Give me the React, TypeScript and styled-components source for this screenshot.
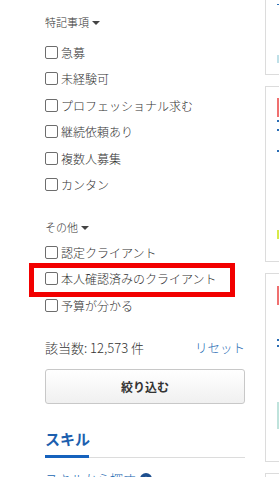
import React from 'react'
import styled, { createGlobalStyle } from 'styled-components'

const GlobalStyle = createGlobalStyle`
  html, body {
    margin: 0;
    padding: 0;
    background: #ffffff;
    overflow: hidden;
  }
  body {
    font-family: "Noto Sans CJK JP", "Noto Sans", sans-serif;
    font-weight: 300;
    color: #333333;
  }
`

const Page = styled.div`
  display: flex;
  align-items: flex-start;
  gap: 20px;
  width: 279px;
  height: 477px;
  padding-left: 45px;
  box-sizing: border-box;
  overflow: hidden;
`

const Sidebar = styled.div`
  flex: 0 0 200px;
  display: flex;
  flex-direction: column;
  padding-top: 12px;
`

const GroupTitle = styled.div<{ $gap: number }>`
  display: flex;
  align-items: center;
  gap: 3px;
  height: 20px;
  font-size: 11px;
  color: #333333;
  margin-bottom: ${({ $gap }) => $gap}px;
`

const Caret = styled.span`
  width: 0;
  height: 0;
  border-left: 4.5px solid transparent;
  border-right: 4.5px solid transparent;
  border-top: 4.5px solid #444444;
  margin-top: 1px;
`

const CheckList = styled.div<{ $after: number }>`
  display: flex;
  flex-direction: column;
  margin-bottom: ${({ $after }) => $after}px;
`

const CheckRow = styled.label`
  position: relative;
  display: flex;
  align-items: center;
  gap: 3px;
  height: 26.5px;
  font-size: 12px;
  color: #333333;
  white-space: nowrap;
`

const Box = styled.span`
  flex: 0 0 auto;
  width: 11px;
  height: 11px;
  border: 1px solid #6d6d6d;
  border-radius: 2px;
  background: #ffffff;
`

const Highlight = styled.span`
  position: absolute;
  left: -16px;
  top: -2.5px;
  width: 206px;
  height: 34px;
  border: 5px solid #f20000;
  box-sizing: border-box;
  pointer-events: none;
`

const CountRow = styled.div`
  display: flex;
  justify-content: space-between;
  align-items: center;
  height: 20px;
  font-size: 12px;
  margin-bottom: 11px;
`

const Count = styled.span`
  font-size: 13px;
  color: #333333;
`

const ResetLink = styled.a`
  font-size: 12.5px;
  color: #2167b1;
  text-decoration: none;
`

const FilterButton = styled.button`
  width: 200px;
  height: 35px;
  border: 1px solid #c8c8c8;
  border-radius: 3px;
  background: linear-gradient(#ffffff, #f0f0f0);
  font-family: inherit;
  font-size: 12px;
  font-weight: bold;
  color: #333333;
  margin-bottom: 24px;
`

const Tabs = styled.div`
  display: flex;
  border-bottom: 1px solid #dcdcdc;
  margin-bottom: 12px;
`

const Tab = styled.div`
  width: 44px;
  font-size: 15px;
  font-weight: bold;
  color: #1d5fae;
  line-height: 22px;
  padding-bottom: 5px;
  border-bottom: 3px solid #1662bd;
  margin-bottom: -1px;
  white-space: nowrap;
`

const SubLink = styled.a`
  display: flex;
  align-items: center;
  gap: 4px;
  font-size: 13px;
  color: #2167b1;
  text-decoration: none;
  line-height: 18px;
`

const Cards = styled.div`
  flex: 0 0 200px;
  display: flex;
  flex-direction: column;
  gap: 11px;
  margin-top: -111px;
`

const Card = styled.div<{ $h: number }>`
  height: ${({ $h }) => $h}px;
  border: 1px solid #dcdcdc;
  box-sizing: border-box;
  padding: 11px 11px;
  display: flex;
  flex-direction: column;
`

const Tag = styled.span<{ $top: number }>`
  display: block;
  width: 40px;
  height: 19px;
  background: #f07070;
  margin-top: ${({ $top }) => $top}px;
`

const Dots = styled.span<{ $top: number; $color: string }>`
  display: block;
  width: 40px;
  height: 2px;
  background: ${({ $color }) => $color};
  margin-top: ${({ $top }) => $top}px;
`

const Thumb = styled.span<{ $top: number; $color: string; $h: number }>`
  display: block;
  width: 30px;
  height: ${({ $h }) => $h}px;
  background: ${({ $color }) => $color};
  margin-top: ${({ $top }) => $top}px;
`

const special = ['急募', '未経験可', 'プロフェッショナル求む', '継続依頼あり', '複数人募集', 'カンタン']
const others = ['認定クライアント', '本人確認済みのクライアント', '予算が分かる']

function Check({ label, marked }: { label: string; marked?: boolean }) {
  return (
    <CheckRow>
      <Box />
      {label}
      {marked && <Highlight />}
    </CheckRow>
  )
}

export default function App() {
  return (
    <>
      <GlobalStyle />
      <Page>
        <Sidebar>
          <GroupTitle $gap={7}>
            特記事項
            <Caret />
          </GroupTitle>
          <CheckList $after={19}>
            {special.map(s => (
              <Check key={s} label={s} />
            ))}
          </CheckList>
          <GroupTitle $gap={2}>
            その他
            <Caret />
          </GroupTitle>
          <CheckList $after={19}>
            {others.map((s, i) => (
              <Check key={s} label={s} marked={i === 1} />
            ))}
          </CheckList>
          <CountRow>
            <Count>該当数: 12,573 件</Count>
            <ResetLink>リセット</ResetLink>
          </CountRow>
          <FilterButton>絞り込む</FilterButton>
          <Tabs>
            <Tab>スキル</Tab>
          </Tabs>
          <SubLink>
            スキルから探す
            <svg width="12" height="12" viewBox="0 0 12 12">
              <circle cx="6" cy="6" r="6" fill="#1d4f8f" />
              <path d="M3.5 7.2 L6 4.7 L8.5 7.2" stroke="#fff" strokeWidth="1.6" fill="none" />
            </svg>
          </SubLink>
        </Sidebar>
        <Cards>
          <Card $h={186}>
            <Tag $top={0} />
            <Dots $top={90} $color="#2a6db5" />
            <Thumb $top={50} $color="#bfe0e8" $h={11} />
          </Card>
          <Card $h={176}>
            <Tag $top={0} />
            <Dots $top={3} $color="#2a6db5" />
            <Dots $top={7} $color="#2a6db5" />
            <Dots $top={19} $color="#2a6db5" />
            <Thumb $top={78} $color="#d7ea4a" $h={9} />
          </Card>
          <Card $h={189}>
            <Tag $top={1} />
            <Dots $top={34} $color="#2a6db5" />
            <Dots $top={4} $color="#2a6db5" />
            <Thumb $top={55} $color="#bfe3dc" $h={27} />
          </Card>
          <Card $h={60} />
        </Cards>
      </Page>
    </>
  )
}
